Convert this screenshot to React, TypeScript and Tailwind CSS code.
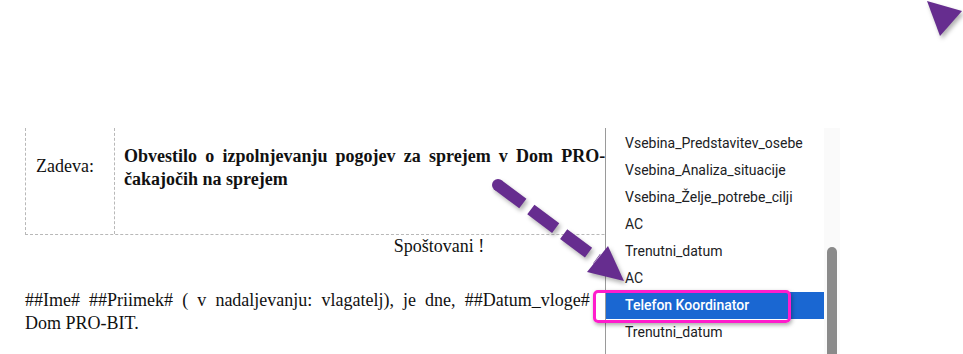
import React from "react";

const items = [
  "Vsebina_Predstavitev_osebe",
  "Vsebina_Analiza_situacije",
  "Vsebina_Želje_potrebe_cilji",
  "AC",
  "Trenutni_datum",
  "AC",
  "Telefon Koordinator",
  "Trenutni_datum",
];

const selected = 6;

export default function App() {
  return (
    <div className="relative w-[963px] h-[354px] overflow-hidden bg-white">
      {/* dokument */}
      <div className="pt-[128px] pl-[25px] font-['Liberation_Serif',serif] text-[18px] leading-[23px] text-[#111]">
        <div className="flex w-[780px] h-[107px] border-l border-b border-dashed border-[#b8b8b8]">
          <div className="w-[89px] shrink-0 border-r border-dashed border-[#b8b8b8] pl-[10px] pt-[27px]">
            Zadeva:
          </div>
          <div className="pl-[9px] pt-[17px] font-bold">
            <div className="whitespace-nowrap [word-spacing:3.7px]">
              Obvestilo o izpolnjevanju pogojev za sprejem v Dom PRO-
            </div>
            <div>čakajočih na sprejem</div>
          </div>
        </div>
        <p className="w-[828px] text-center">Spoštovani !</p>
        <p className="mt-[31px] whitespace-nowrap [word-spacing:4.6px]">
          ##Ime# ##Priimek# ( v nadaljevanju: vlagatelj), je dne, ##Datum_vloge#
        </p>
        <p>Dom PRO-BIT.</p>
      </div>

      {/* seznam polj */}
      <div className="absolute left-[605px] top-[128px] flex h-[226px] w-[235px] border-l border-[#9a9a9a] bg-white font-['Roboto',sans-serif]">
        <div className="w-[218px] pt-[2px]">
          {items.map((it, i) => (
            <div
              key={i}
              className={`h-[27px] flex items-center pl-[19px] text-[14px] whitespace-nowrap ${
                i === selected ? "bg-[#1a67d2] text-white font-medium" : "text-[#202124]"
              }`}
            >
              {it}
            </div>
          ))}
        </div>
        <div className="flex-1 bg-[#fafafa] pt-[119px] flex justify-center">
          <div className="w-[10px] h-full rounded-t-full bg-[#8a8a8a]" />
        </div>
      </div>

      {/* oznaka */}
      <div className="absolute left-[593px] top-[290px] w-[198px] h-[33px] rounded-[5px] border-[3px] border-[#ff1ccc] shadow-[1px_2px_4px_rgba(0,0,0,0.35)]" />

      <svg
        className="absolute inset-0 pointer-events-none drop-shadow-[2px_3px_2px_rgba(0,0,0,0.3)]"
        width="963"
        height="354"
        viewBox="0 0 963 354"
      >
        <line
          x1="498"
          y1="185"
          x2="597"
          y2="259"
          stroke="#662d8f"
          strokeWidth="12"
          strokeDasharray="31 10"
        />
        <circle cx="498" cy="185" r="6" fill="#662d8f" />
        <polygon points="608,246 587,272 624,281" fill="#662d8f" />
        <polygon points="927,1 962,11 940,36" fill="#662d8f" />
      </svg>
    </div>
  );
}
